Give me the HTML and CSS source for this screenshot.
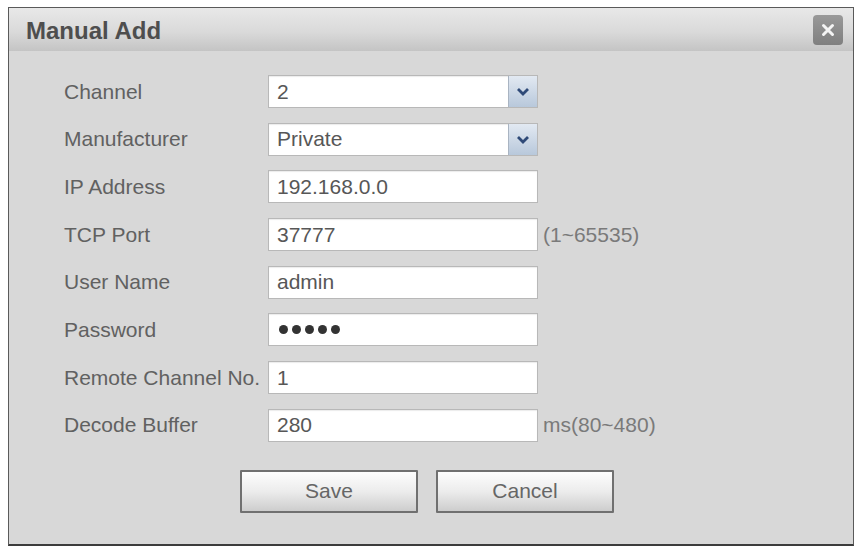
FILE: index.html
```html
<!DOCTYPE html>
<html lang="en">
<head>
    <meta charset="UTF-8">
    <meta name="viewport" content="width=device-width, initial-scale=1.0">
    <title>Manual Add</title>
    <link rel="stylesheet" href="styles.css">
</head>
<body>
    <div class="dialog">
        <div class="title-bar">
            <h1>Manual Add</h1>
            <span class="close-btn">
                <svg width="16" height="16" viewBox="0 0 16 16">
                    <path d="M3.5 3.5 L12.5 12.5 M12.5 3.5 L3.5 12.5" stroke="#f4f4f4" stroke-width="3" stroke-linecap="round"/>
                </svg>
            </span>
        </div>

        <div class="form">
            <label class="label">Channel</label>
            <div class="field select">
                <span class="value">2</span>
                <span class="arrow">
                    <svg width="14" height="9" viewBox="0 0 14 9">
                        <path d="M2 2 L7 7 L12 2" fill="none" stroke="#2f4a78" stroke-width="2.8"/>
                    </svg>
                </span>
            </div>
            <span class="hint"></span>

            <label class="label">Manufacturer</label>
            <div class="field select">
                <span class="value">Private</span>
                <span class="arrow">
                    <svg width="14" height="9" viewBox="0 0 14 9">
                        <path d="M2 2 L7 7 L12 2" fill="none" stroke="#2f4a78" stroke-width="2.8"/>
                    </svg>
                </span>
            </div>
            <span class="hint"></span>

            <label class="label">IP Address</label>
            <div class="field"><span class="value">192.168.0.0</span></div>
            <span class="hint"></span>

            <label class="label">TCP Port</label>
            <div class="field"><span class="value">37777</span></div>
            <span class="hint">(1~65535)</span>

            <label class="label">User Name</label>
            <div class="field"><span class="value">admin</span></div>
            <span class="hint"></span>

            <label class="label">Password</label>
            <div class="field">
                <span class="dots">
                    <i class="dot"></i><i class="dot"></i><i class="dot"></i><i class="dot"></i><i class="dot"></i>
                </span>
            </div>
            <span class="hint"></span>

            <label class="label">Remote Channel No.</label>
            <div class="field"><span class="value">1</span></div>
            <span class="hint"></span>

            <label class="label">Decode Buffer</label>
            <div class="field"><span class="value">280</span></div>
            <span class="hint">ms(80~480)</span>
        </div>

        <div class="buttons">
            <button>Save</button>
            <button>Cancel</button>
        </div>
    </div>
</body>
</html>
```

FILE: styles.css
```css
* {
    margin: 0;
    padding: 0;
    box-sizing: border-box;
}

body {
    font-family: "Liberation Sans", Arial, sans-serif;
    background-color: #ffffff;
    color: #5e5e5e;
}

.dialog {
    width: 846px;
    height: 539px;
    margin: 7px 0 0 8px;
    background: #d8d8d8;
    border: 1px solid #5a5a5a;
    border-bottom: 2px solid #3c3c3c;
}

.title-bar {
    height: 43px;
    display: flex;
    align-items: center;
    justify-content: space-between;
    padding: 0 10px 0 17px;
    background: linear-gradient(to bottom, #e8e8e8 0%, #dadada 55%, #c4c4c4 100%);
}

h1 {
    font-size: 24px;
    font-weight: bold;
    color: #4e4e4e;
    margin-top: 2px;
}

.close-btn {
    width: 30px;
    height: 30px;
    border-radius: 4px;
    background: linear-gradient(to bottom, #999, #7f7f7f);
    display: flex;
    align-items: center;
    justify-content: center;
    margin-top: 1px;
}

.form {
    display: grid;
    grid-template-columns: 204px 270px auto;
    grid-auto-rows: 33px;
    row-gap: 14.7px;
    align-items: center;
    padding: 24px 0 0 55px;
}

.label {
    font-size: 21px;
    color: #616161;
    white-space: nowrap;
}

.field {
    height: 33px;
    background: #ffffff;
    border: 1px solid #b8b8b8;
    box-shadow: inset 0 1px 1px rgba(0,0,0,0.08);
    display: flex;
    align-items: center;
    padding-left: 8px;
    font-size: 21px;
    color: #575757;
}

.select .value {
    flex: 1;
}

.arrow {
    width: 29px;
    height: 31px;
    display: flex;
    align-items: center;
    justify-content: center;
    background: linear-gradient(to bottom, #e2e9f2, #b8c8db);
    border-left: 1px solid #a9b4c2;
}

.dots {
    display: flex;
    gap: 4px;
    margin-left: 2px;
}

.dot {
    width: 9px;
    height: 9px;
    border-radius: 50%;
    background: #333;
}

.hint {
    font-size: 21px;
    color: #7a7a7a;
    padding-left: 5px;
    white-space: nowrap;
}

.buttons {
    display: flex;
    gap: 18px;
    margin: 28px 0 0 231px;
}

button {
    width: 178px;
    height: 43px;
    font-family: "Liberation Sans", Arial, sans-serif;
    font-size: 21px;
    color: #666;
    background: linear-gradient(to bottom, #fdfdfd 0%, #ececec 50%, #cdcdcd 100%);
    border: 2px solid #707070;
    border-radius: 1px;
    cursor: pointer;
}
```
